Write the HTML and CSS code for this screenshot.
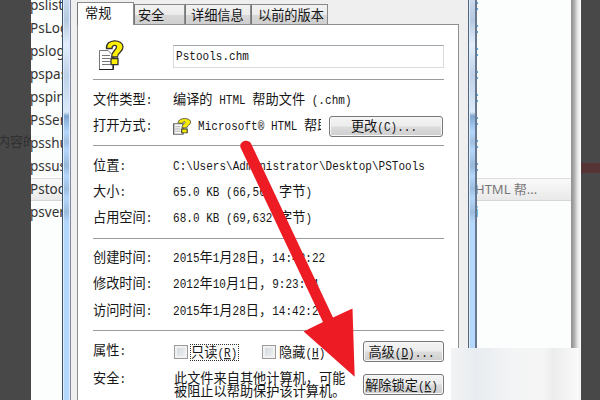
FILE: index.html
```
<!DOCTYPE html>
<html lang="zh-CN">
<head>
<meta charset="utf-8">
<title>Pstools.chm 属性</title>
<link rel="stylesheet" href="styles.css">
</head>
<body>
<div class="screen">
  <aside class="shade shade-left"><span>内容的</span></aside>
  <ul class="files">
    <li>pslist</li><li>PsLog</li><li>pslog</li><li>pspas</li><li>psping</li><li>PsServ</li><li>psshut</li><li>pssusp</li><li class="selected">Pstools</li><li>psvers</li>
  </ul>
  <main class="dialog">
    <div class="frame"></div>
    <div class="body">
      <nav class="tabs">
        <span class="tab active">常规</span><span class="tab t2">安全</span><span class="tab t3">详细信息</span><span class="tab t4">以前的版本</span>
      </nav>
      <section class="page">
        <div class="group name-group">
          <svg class="icon" viewBox="0 0 26 31">
            <path d="M1.500 10.500H10L14.500 15V29.500H1.500Z" fill="#fff" stroke="#777"/>
            <path d="M1 29.500H15.500V15" fill="none" stroke="#222"/>
            <path d="M4 15.500h8M4 18.500h8M4 21.500h8M4 24.500h8" stroke="#777"/>
            <path d="M8.500 8.500C7.500 -1.500 25 -1.500 25 7C25 12.500 19.500 12 19.500 17H13.500C13.500 11 18.500 10 18.500 7C18.500 4.500 14 4.500 14 8.500Z" fill="#fff000" stroke="#333" stroke-width="1.300"/>
            <path d="M13 18.700h7v6h-7z" fill="#fff000" stroke="#333" stroke-width="1.300"/>
          </svg>
          <div class="input"><i>Pstools.chm</i></div>
        </div>
        <div class="group g-type">
          <div class="row"><label>文件类型<i>:</i></label><p>编译的<i> HTML </i>帮助文件<i> (.chm)</i></p></div>
          <div class="row"><label>打开方式<i>:</i></label>
            <svg class="mini" viewBox="0 0 26 31" preserveAspectRatio="none">
              <path d="M1 10.500H14.500V29.500H1Z" fill="#fff" stroke="#666" stroke-width="2"/>
              <path d="M3 16h8M3 20h8M3 24h8" stroke="#777"/>
              <path d="M7.500 9.500C6.500 -1.500 25.500 -1.500 25.500 7.500C25.500 13 20 13 20 18H13C13 11 17.500 10.500 17.500 8C17.500 6 14.500 6 14.500 9.500Z" fill="#f5ea00" stroke="#444" stroke-width="1.300"/>
              <path d="M12.500 20h8v7h-8z" fill="#f5ea00" stroke="#333" stroke-width="1.500"/>
            </svg>
            <p class="app"><i>Microsoft® HTML </i>帮助</p>
            <button class="change">更改<i>(C)...</i></button></div>
        </div>
        <div class="group">
          <div class="row"><label>位置<i>:</i></label><p><i>C:\Users\Administrator\Desktop\PSTools</i></p></div>
          <div class="row"><label>大小<i>:</i></label><p><i>65.0 KB (66,560 </i>字节<i>)</i></p></div>
          <div class="row"><label>占用空间<i>:</i></label><p><i>68.0 KB (69,632 </i>字节<i>)</i></p></div>
        </div>
        <div class="group">
          <div class="row"><label>创建时间<i>:</i></label><p><i>2015</i>年<i>1</i>月<i>28</i>日，<i>14:42:22</i></p></div>
          <div class="row"><label>修改时间<i>:</i></label><p><i>2012</i>年<i>10</i>月<i>1</i>日，<i>9:23:04</i></p></div>
          <div class="row"><label>访问时间<i>:</i></label><p><i>2015</i>年<i>1</i>月<i>28</i>日，<i>14:42:22</i></p></div>
        </div>
        <div class="group last">
          <div class="row attr"><label>属性<i>:</i></label>
            <span class="check"></span><span class="opt focus">只读<i>(<u>R</u>)</i></span>
            <span class="check second"></span><span class="opt">隐藏<i>(<u>H</u>)</i></span>
            <button class="side">高级<i>(<u>D</u>)...</i></button></div>
          <div class="row sec"><label>安全<i>:</i></label>
            <p class="note">此文件来自其他计算机，可能<br>被阻止以帮助保护该计算机。</p>
            <button class="side">解除锁定<i>(<u>K</u>)</i></button></div>
        </div>
      </section>
    </div>
    <div class="frame right"></div>
  </main>
  <ul class="types">
    <li>:</li><li>:</li><li>:</li><li>:</li><li>:</li><li>:</li><li>:</li><li>:</li><li class="selected"><span>HTML 帮...</span></li><li>i</li>
  </ul>
  <div class="edge"></div>
  <aside class="shade shade-right"><div class="strip"></div></aside>
  <div class="veil"></div>
  <svg class="arrow" viewBox="0 0 600 400"><path d="M240.500 147.500C238.500 141 248.500 138 251 143.500L333 317.500L352.500 308.500L354.700 376.800L303.700 331.500L323 322Z" fill="#ed1c24"/></svg>
</div>
</body>
</html>
```
FILE: styles.css
```
* { box-sizing: border-box; }
body { margin: 0; }
ul { list-style: none; margin: 0; padding: 0; }
p { margin: 0; }
.screen {
  position: relative;
  display: flex;
  width: 600px;
  height: 400px;
  overflow: hidden;
  background: #fcfdfd;
  color: #161616;
  font: 13.2px/26.4px "Noto Sans CJK SC", sans-serif;
  white-space: nowrap;
}
i {
  display: inline-block;
  font: 11px/12px "Liberation Mono", monospace;
  letter-spacing: 0.03px;
  white-space: pre;
  vertical-align: 0;
  transform: scaleY(1.2);
  transform-origin: 50% 80%;
}
.shade { background: #484848; overflow: hidden; flex: none; }
.shade-left { width: 31px; padding-top: 128px; color: #303030; font-size: 13px; }
.shade-left span { margin-left: -3px; }
.shade-right { width: 19px; padding-top: 163px; }
.strip { height: 10px; background: #563335; }

.files, .types {
  flex: none;
  margin-top: -6px;
  overflow: hidden;
  font: 13.5px/23px "Noto Sans", "Noto Sans CJK SC", sans-serif;
}
.files { width: 31px; color: #333; }
.files li { height: 23px; text-indent: -1px; }
.types { width: 94px; color: #2d6296; }
.types li { height: 23px; text-indent: -2px; }
.selected {
  background: linear-gradient(#fafafa, #e9e9e9);
  border-top: 1px solid #ddd;
  border-bottom: 1px solid #d6d6d6;
  line-height: 20px;
}
.types .selected { color: #777; font-size: 13px; }

.dialog { display: flex; flex: none; width: 415px; background: #efefef; }
.frame {
  width: 9px;
  border-left: 1px solid #3c5068;
  border-right: 1px solid #8587a0;
  background: linear-gradient(90deg, #dcecff 0 1px, transparent 1px 6px, #dcecff 6px), linear-gradient(#c8d9ed 0, #b4c9e0 20px, #e4effc 45px, #bdd1e8 75px, #dceafa 112px, #7fa5ce 116px, #b4d7fc 132px, #a0bfdf 142px, #b4d7fc 150px, #98b8d8 166px, #b4d7fc 176px, #9cbddd 189px, #b4d7fc 198px, #9cbddd 212px, #b4d7fc 222px);
}
.frame.right { border-left-color: #52657c; border-right: 2px solid #68778d; }
.body { width: 397px; padding: 2px 9px 0 6px; }
.tabs { display: flex; align-items: flex-end; height: 22px; }
.tab {
  height: 20px;
  border: 1px solid #8a8a8a;
  border-left-color: #777;
  border-bottom: 0;
  background: linear-gradient(#f2f2f2, #ebebeb 50%, #d8d8d8 52%, #cfcfcf);
  line-height: 19px;
  padding-left: 3px;
}
.tab.active {
  height: 23px;
  width: 57px;
  margin-bottom: -1px;
  padding-left: 7px;
  background: #fff;
  line-height: 19px;
  position: relative;
}
.t2 { width: 51px; }
.t3 { width: 66px; padding-left: 5px; }
.t4 { width: 77px; padding-left: 6px; }
.page {
  height: 380px;
  border: 1px solid #8e8e8e;
  background: #fff;
  padding: 0 14px 0 15px;
}
.group { height: 92.5px; padding-top: 5.5px; border-bottom: 1px solid #9b9b9b; }
.name-group { display: flex; height: 55px; padding: 15px 0 0 5px; }
.icon { width: 26px; height: 31px; flex: none; }
.input {
  width: 271px;
  height: 23px;
  margin: 5px -1px 0 49px;
  border: 1px solid #d8dce0;
  border-top-color: #9da4aa;
  line-height: 18px;
  padding-left: 2px;
}
.g-type { height: 66px; }
.row { display: flex; align-items: center; height: 26.4px; }
label { width: 80px; flex: none; }
.mini { width: 18px; height: 17px; margin-top: 3px; flex: none; }
.app { width: 123px; margin-left: 7px; overflow: hidden; flex: none; }
button {
  flex: none;
  border: 1px solid #777;
  border-radius: 3px;
  padding: 0;
  background: linear-gradient(#f4f4f4, #ececec 48%, #dcdcdc 52%, #cecece);
  box-shadow: inset 0 0 0 1px #f8f8f8;
  color: #161616;
  font: 13.2px/18px "Noto Sans CJK SC", sans-serif;
  white-space: nowrap;
}
.change { width: 114px; height: 21px; margin: 2px 0 0 8px; padding-right: 4px; }
.last { border: 0; padding-top: 6px; }
.attr { height: 27px; }
.check {
  width: 14px;
  height: 14px;
  flex: none;
  margin: 3px 2px 0 1px;
  border: 1px solid #9b9b9b;
  background: linear-gradient(135deg, #cfd3d6, #f4f5f6);
  box-shadow: inset 0 0 0 2px #f2f2f2;
}
.opt { flex: none; height: 17px; line-height: 13px; width: 49px; margin-top: 4px; border: 1px solid transparent; }
.focus { border: 1px dotted #333; }
.second { margin-left: 23px; }
.side { width: 81px; height: 21px; margin-left: auto; padding-right: 4px; }
.attr .side { margin-top: 2px; }
.sec { height: 32px; align-items: flex-start; }
.sec label { margin-top: 1px; }
.note { line-height: 13px; margin: 7px 0 0 1px; }
.sec .side { margin-top: 10px; }
.edge { width: 10px; flex: none; background: linear-gradient(90deg, #8e8e8e, #aaa 30%, #e3e3e3 65%, #fff); }
.veil {
  position: absolute;
  left: 451px;
  top: 348px;
  width: 128px;
  height: 52px;
  background: linear-gradient(90deg, #f2f3f4, #e8ecf0 20%, #f3f4f5 48%, #f5f5f5 72%, #ececec 80%, #f3f3f3 90%, #fafafa);
}
.arrow { position: absolute; left: 0; top: 0; width: 600px; height: 400px; }
```
